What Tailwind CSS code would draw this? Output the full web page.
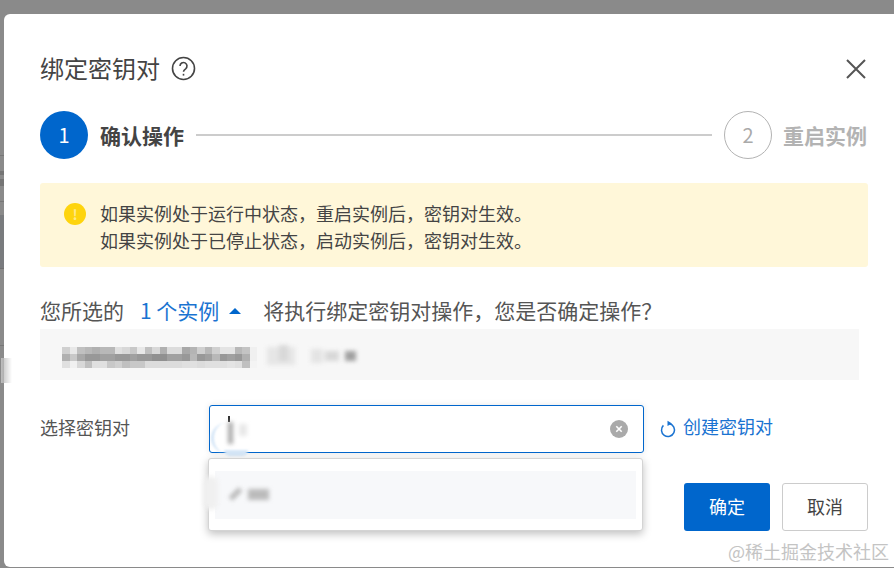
<!DOCTYPE html>
<html lang="zh-CN">
<head>
  <meta charset="UTF-8" />
  <title>绑定密钥对</title>
  <script src="https://cdn.jsdelivr.net/npm/@tailwindcss/browser@4"></script>
</head>
<body class="font-['Noto_Sans_CJK_SC','Noto_Sans',sans-serif]">
  <div class="relative w-[894px] h-[568px] overflow-hidden bg-[#8a8a8a] pt-[14px] pl-[4px]">

    <!-- page behind the mask -->
    <div class="absolute left-0 top-[155px] w-[4px] h-px bg-[#777]"></div>
    <div class="absolute left-0 top-[171px] w-[4px] h-[4px] bg-[#757575]"></div>
    <div class="absolute left-0 top-[179px] w-[4px] h-[7px] bg-[#757575]"></div>
    <div class="absolute left-0 top-[201px] w-[4px] h-px bg-[#777]"></div>
    <div class="absolute left-0 top-[215px] w-[4px] h-[53px] bg-[#797b7e]"></div>
    <div class="absolute left-0 top-[268px] w-[4px] h-px bg-[#707070]"></div>
    <div class="absolute left-0 top-[345px] w-[4px] h-px bg-[#777]"></div>

    <!-- Modal -->
    <div class="relative w-[900px] h-[553px] bg-white rounded-[6px] pl-[36px] pt-[37px]">
      <!-- smudge left by the blur on the modal edge -->
      <div class="absolute -left-[3px] top-[344px] w-[11px] h-[25px] bg-linear-to-r from-[#bdbdbd] to-white/0"></div>

      <div class="w-[828px]">

        <!-- Title -->
        <div class="flex items-center justify-between h-[34px]">
          <div class="flex items-center">
            <h1 class="text-[24px] leading-[34px] text-[#444]">绑定密钥对</h1>
            <svg class="ml-[11px] mt-[1px]" width="25" height="25" viewBox="0 0 25 25" fill="none" stroke="#444" stroke-width="1.6">
              <circle cx="12.5" cy="12.5" r="11"/>
              <path d="M9 10a3.5 3.5 0 1 1 5.6 2.8c-1.3.9-2.1 1.5-2.1 3"/>
              <path d="M12.5 17.8v1.8"/>
            </svg>
          </div>
          <svg class="mr-[2px] mt-[1px]" width="20" height="20" viewBox="0 0 20 20" stroke="#555" stroke-width="2">
            <path d="M1 1l18 18M19 1L1 19"/>
          </svg>
        </div>

        <!-- Steps -->
        <div class="flex items-center mt-[26px] h-[48px]">
          <div class="w-[48px] h-[48px] rounded-full bg-[#06c] text-white text-[20px] flex items-center justify-center">1</div>
          <div class="ml-[12px] text-[21px] font-bold text-[#444] translate-y-[1px]">确认操作</div>
          <div class="ml-[12px] w-[516px] h-[2px] bg-[#ccc]"></div>
          <div class="ml-[12px] w-[48px] h-[48px] rounded-full border border-[#b3b3b3] text-[#aaa] text-[20px] flex items-center justify-center">2</div>
          <div class="ml-[11px] text-[21px] font-bold text-[#b3b3b3] whitespace-nowrap translate-y-[1px]">重启实例</div>
        </div>

        <!-- Alert -->
        <div class="flex mt-[24px] h-[84px] bg-[#fff7d9] rounded-[3px] pl-[24px] pt-[18px]">
          <div class="w-[22px] h-[22px] mt-[2px] rounded-full bg-[#fed40e] text-[#ffe98a] text-[14px] font-bold leading-[22px] text-center">!</div>
          <div class="ml-[14px] -mt-[1px] text-[18px] leading-[27px] text-[#444]">
            <p>如果实例处于运行中状态，重启实例后，密钥对生效。</p>
            <p>如果实例处于已停止状态，启动实例后，密钥对生效。</p>
          </div>
        </div>

        <!-- Selected instances -->
        <div class="flex items-center mt-[29px] h-[30px] text-[21px] text-[#555] whitespace-nowrap">
          <span>您所选的</span>
          <span class="ml-[16px] text-[#1a73d1]">1 个实例</span>
          <span class="ml-[10px] w-0 h-0 border-x-[6px] border-x-transparent border-b-[6px] border-b-[#06c]"></span>
          <span class="ml-[22px]">将执行绑定密钥对操作，您是否确定操作？</span>
        </div>
        <div class="relative mt-[3px] w-[819px] h-[51px] bg-[#f7f7f7]">
          <svg id="mosaic" class="absolute left-[22px] top-[18px] blur-[0.6px]" width="196" height="21" viewBox="0 0 196 21" shape-rendering="crispEdges"></svg>
          <svg class="absolute left-[225px] top-[12px] blur-[2px]" width="100" height="28" viewBox="0 0 100 28">
            <rect x="2" y="6" width="28" height="18" fill="#e6e6e6"/>
            <rect x="14" y="4" width="9" height="16" fill="#d8d8d8"/>
            <rect x="46" y="8" width="12" height="14" fill="#e4e4e4"/>
            <rect x="60" y="10" width="14" height="10" fill="#d8d8d8"/>
            <rect x="80" y="10" width="11" height="10" fill="#a0a0a0"/>
          </svg>
        </div>

        <!-- Key pair select -->
        <div class="flex items-center mt-[25px] h-[48px]">
          <div class="w-[169px] text-[18px] text-[#555] -translate-y-[2px]">选择密钥对</div>
          <div class="relative flex items-center justify-end w-[435px] h-[48px] bg-white border border-[#06c] rounded-[3px] pr-[15px] shadow-[0_0_6px_rgba(0,0,0,0.1)]">
            <span class="absolute left-[1px] top-[17px] w-[30px] h-[30px] rounded-full border-l-[3px] border-[#d5e6f7] blur-[1px]"></span>
            <span class="absolute left-[14px] top-[44px] w-[24px] h-[6px] rounded-b-full bg-[#d5e6f7] blur-[1px]"></span>
            <span class="absolute left-[18px] top-[10px] w-[2px] h-[6px] bg-[#333]"></span>
            <span class="absolute left-[18px] top-[16px] w-[5px] h-[22px] bg-[#aaa] blur-[2px]"></span>
            <span class="absolute left-[29px] top-[18px] w-[8px] h-[12px] bg-[#e8e8e8] blur-[2px]"></span>
            <svg width="18" height="18" viewBox="0 0 18 18" stroke="#fff" stroke-width="1.6">
              <circle cx="9" cy="9" r="9" fill="#aaa" stroke="none"/>
              <path d="M6.3 6.3l5.4 5.4M11.7 6.3l-5.4 5.4"/>
            </svg>
          </div>
          <svg class="ml-[16px]" width="16" height="18" viewBox="0 0 16 18" fill="none" stroke="#1a73d1" stroke-width="1.5">
            <path d="M9.5 3.7A6.5 6.5 0 1 1 3.4 5.4"/>
            <path d="M7.5 .8l4.5 2.7L7.5 6z" fill="#1a73d1" stroke="none"/>
          </svg>
          <a class="ml-[7px] text-[18px] text-[#1a73d1] whitespace-nowrap -translate-y-[3px]">创建密钥对</a>
        </div>

        <!-- Footer -->
        <div class="flex justify-end gap-[12px] mt-[30px]">
          <button class="w-[86px] h-[48px] rounded-[3px] bg-[#06c] text-white text-[18px] pb-[2px]">确定</button>
          <button class="w-[86px] h-[48px] rounded-[3px] border border-[#ccc] bg-white text-[#444] text-[18px] pb-[2px]">取消</button>
        </div>
      </div>

      <!-- Dropdown -->
      <div class="absolute left-[204px] top-[444px] w-[435px] h-[73px] bg-white border border-[#d4d4d4] rounded-[3px] shadow-[0_3px_8px_rgba(0,0,0,0.25)] pl-[6px] pt-[12px]">
        <div class="relative w-[421px] h-[48px] bg-[#f7f8fa]">
          <span class="absolute -left-[11px] top-[5px] w-[14px] h-[34px] rounded-full bg-[#f0f0f0] blur-[2px]"></span>
          <span class="absolute left-[18px] top-[16px] w-[5px] h-[14px] rotate-45 bg-[#b5b5b5] blur-[2px]"></span>
          <span class="absolute left-[33px] top-[18px] w-[21px] h-[11px] bg-[#bbb] blur-[2px]"></span>
        </div>
      </div>
    </div>

    <div class="absolute left-[728px] top-[538px] text-[18px] leading-[26px] text-[#c4c4c4] whitespace-nowrap">@稀土掘金技术社区</div>
    <div class="absolute left-0 top-[567px] w-[894px] h-px bg-[#8a8a8a]"></div>
  </div>

  <script>
    // mosaic over the instance name, one row per 7px band
    const mosaicRows = [
      ["d0","e8","c0","b8","b0","b8","b8","e0","d8","c8","e8","c0","d8","b0","dc","dc","a8","b4","d0","b8","d0","e4","e4","b8","c4","f0"],
      ["b0","c8","a8","98","98","a0","a0","98","98","a0","98","98","90","90","a0","a0","98","b8","98","a0","b8","98","a0","98","b0","f0"],
      ["e0","f0","d8","c0","e0","e0","c8","d0","c0","c8","c8","dc","dc","dc","dc","dc","e0","e0","dc","e0","e0","e0","e4","e0","c0","f4"]
    ];
    const mosaic = document.getElementById("mosaic");
    mosaicRows.forEach((row, y) => {
      row.forEach((c, x) => {
        const rect = document.createElementNS("http://www.w3.org/2000/svg", "rect");
        rect.setAttribute("x", x * 7.5);
        rect.setAttribute("y", y * 7);
        rect.setAttribute("width", 7.5);
        rect.setAttribute("height", 7);
        rect.setAttribute("fill", "#" + c + c + c);
        mosaic.appendChild(rect);
      });
    });
  </script>
</body>
</html>
